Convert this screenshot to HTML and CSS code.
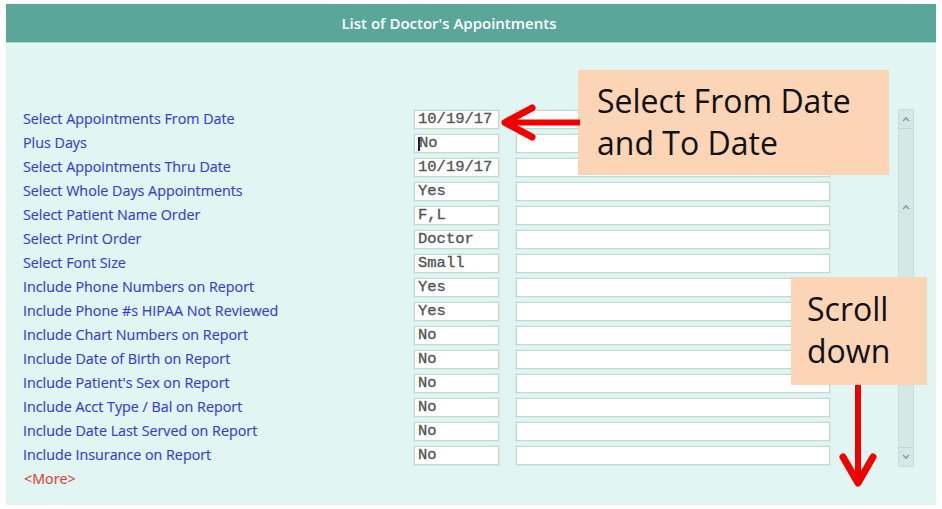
FILE: index.html
```html
<!DOCTYPE html>
<html>
<head>
<meta charset="utf-8">
<link rel="stylesheet" href="styles.css">
</head>
<body>
<div class="page">
  <div class="panel">
    <div class="header"><h1 class="title">List of Doctor's Appointments</h1></div>
    <div class="body">
      <div class="form">
        <div class="rows">
          <div class="label">Select Appointments From Date</div><div class="field">10/19/17</div><div class="field wide"></div>
          <div class="label">Plus Days</div><div class="field"><span class="caret"></span>No</div><div class="field wide"></div>
          <div class="label">Select Appointments Thru Date</div><div class="field">10/19/17</div><div class="field wide"></div>
          <div class="label">Select Whole Days Appointments</div><div class="field">Yes</div><div class="field wide"></div>
          <div class="label">Select Patient Name Order</div><div class="field">F,L</div><div class="field wide"></div>
          <div class="label">Select Print Order</div><div class="field">Doctor</div><div class="field wide"></div>
          <div class="label">Select Font Size</div><div class="field">Small</div><div class="field wide"></div>
          <div class="label">Include Phone Numbers on Report</div><div class="field">Yes</div><div class="field wide"></div>
          <div class="label">Include Phone #s HIPAA Not Reviewed</div><div class="field">Yes</div><div class="field wide"></div>
          <div class="label">Include Chart Numbers on Report</div><div class="field">No</div><div class="field wide"></div>
          <div class="label">Include Date of Birth on Report</div><div class="field">No</div><div class="field wide"></div>
          <div class="label">Include Patient's Sex on Report</div><div class="field">No</div><div class="field wide"></div>
          <div class="label">Include Acct Type / Bal on Report</div><div class="field">No</div><div class="field wide"></div>
          <div class="label">Include Date Last Served on Report</div><div class="field">No</div><div class="field wide"></div>
          <div class="label">Include Insurance on Report</div><div class="field">No</div><div class="field wide"></div>
        </div>
        <div class="more">&lt;More&gt;</div>
      </div>
      <div class="scrollbar">
        <div class="sb-btn sb-up"><svg width="10" height="6" viewBox="0 0 10 6"><polyline points="2,5 5,2 8,5" fill="none" stroke="#7f9eb0" stroke-width="1.6"/></svg></div>
        <div class="sb-track">
          <svg class="sb-mid" width="10" height="6" viewBox="0 0 10 6"><polyline points="2,5 5,2 8,5" fill="none" stroke="#7f9eb0" stroke-width="1.6"/></svg>
        </div>
        <div class="sb-btn sb-down"><svg width="10" height="6" viewBox="0 0 10 6"><polyline points="2,1 5,4 8,1" fill="none" stroke="#7f9eb0" stroke-width="1.6"/></svg></div>
      </div>
    </div>
  </div>

  <div class="callout callout-dates">Select From Date<br>and To Date</div>
  <div class="callout callout-scroll">Scroll<br>down</div>

  <svg class="arrows" width="942" height="509" viewBox="0 0 942 509">
    <g stroke="#f00000" fill="none" stroke-linecap="round" stroke-linejoin="round">
      <line x1="506" y1="122.5" x2="580" y2="122.5" stroke-width="6" stroke-linecap="butt"/>
      <polyline points="532,108 505,122.5 532,137" stroke-width="7"/>
      <line x1="858" y1="385" x2="858" y2="481" stroke-width="6" stroke-linecap="butt"/>
      <polyline points="843,457 858,483 873,457" stroke-width="7"/>
    </g>
  </svg>
</div>
</body>
</html>
```

FILE: styles.css
```css
* { box-sizing: border-box; }
html, body { margin: 0; padding: 0; background: #ffffff; }
.page { position: relative; width: 942px; height: 509px; overflow: hidden; }

.panel {
  margin: 4px 0 0 6px;
  width: 930px;
  height: 501px;
  background: #e1f5f2;
  display: flex;
  flex-direction: column;
}
.header {
  height: 39px;
  background: #5aa79a;
  border-bottom: 1px solid #a9d7cd;
  display: flex;
  align-items: center;
  justify-content: center;
  padding-right: 44px;
}
.title {
  margin: 0;
  font-family: "Open Sans", sans-serif;
  font-weight: 600;
  font-size: 15px;
  color: #ffffff;
}
.body {
  flex: 1;
  display: flex;
  align-items: flex-start;
}
.form { padding: 64px 0 0 17px; }
.rows {
  display: grid;
  grid-template-columns: 374px 85px 314px;
  column-gap: 17px;
  grid-auto-rows: 24px;
  align-items: center;
}
.label, .more {
  font-family: "Open Sans", sans-serif;
  font-size: 14.3px;
  color: #3a3ad9;
  line-height: 24px;
  white-space: nowrap;
  -webkit-text-stroke: 0.15px #3a3ad9;
}
.more { color: #e0413f; -webkit-text-stroke: 0.15px #e0413f; padding-left: 1px; line-height: 24px; }
.field {
  height: 19px;
  background: #ffffff;
  border: 1px solid #c3d9d3;
  box-shadow: 0 0 0 1px #d8ebe7;
  font-family: "Liberation Mono", monospace;
  font-size: 15.5px;
  line-height: 17px;
  color: #555555;
  -webkit-text-stroke: 0.35px #555555;
  padding: 1px 0 0 3px;
  white-space: nowrap;
  display: flex;
  align-items: center;
}
.caret {
  display: inline-block;
  width: 2px;
  height: 14px;
  background: #1d1d4a;
  margin-right: -1px;
}

.scrollbar {
  margin: 66px 0 0 68px;
  width: 16px;
  height: 358px;
  background: #d4e9e6;
  border: 1px solid #c9ddd9;
  display: flex;
  flex-direction: column;
}
.sb-btn {
  height: 19px;
  display: flex;
  align-items: center;
  justify-content: center;
}
.sb-up { border-bottom: 1px solid #c2d6d3; }
.sb-down { border-top: 1px solid #c2d6d3; }
.sb-track {
  flex: 1;
  display: flex;
  justify-content: center;
  padding-top: 75px;
}
.sb-mid { display: block; }

.callout {
  position: absolute;
  background: #fbd5b5;
  font-family: "Open Sans", sans-serif;
  font-size: 32px;
  line-height: 42px;
  color: #111111;
}
.callout-dates {
  left: 578px;
  top: 70px;
  width: 311px;
  height: 105px;
  padding: 10px 0 0 19px;
}
.callout-scroll {
  left: 791px;
  top: 277px;
  width: 136px;
  height: 108px;
  padding: 11px 0 0 16px;
}
.arrows { position: absolute; left: 0; top: 0; pointer-events: none; }
```
